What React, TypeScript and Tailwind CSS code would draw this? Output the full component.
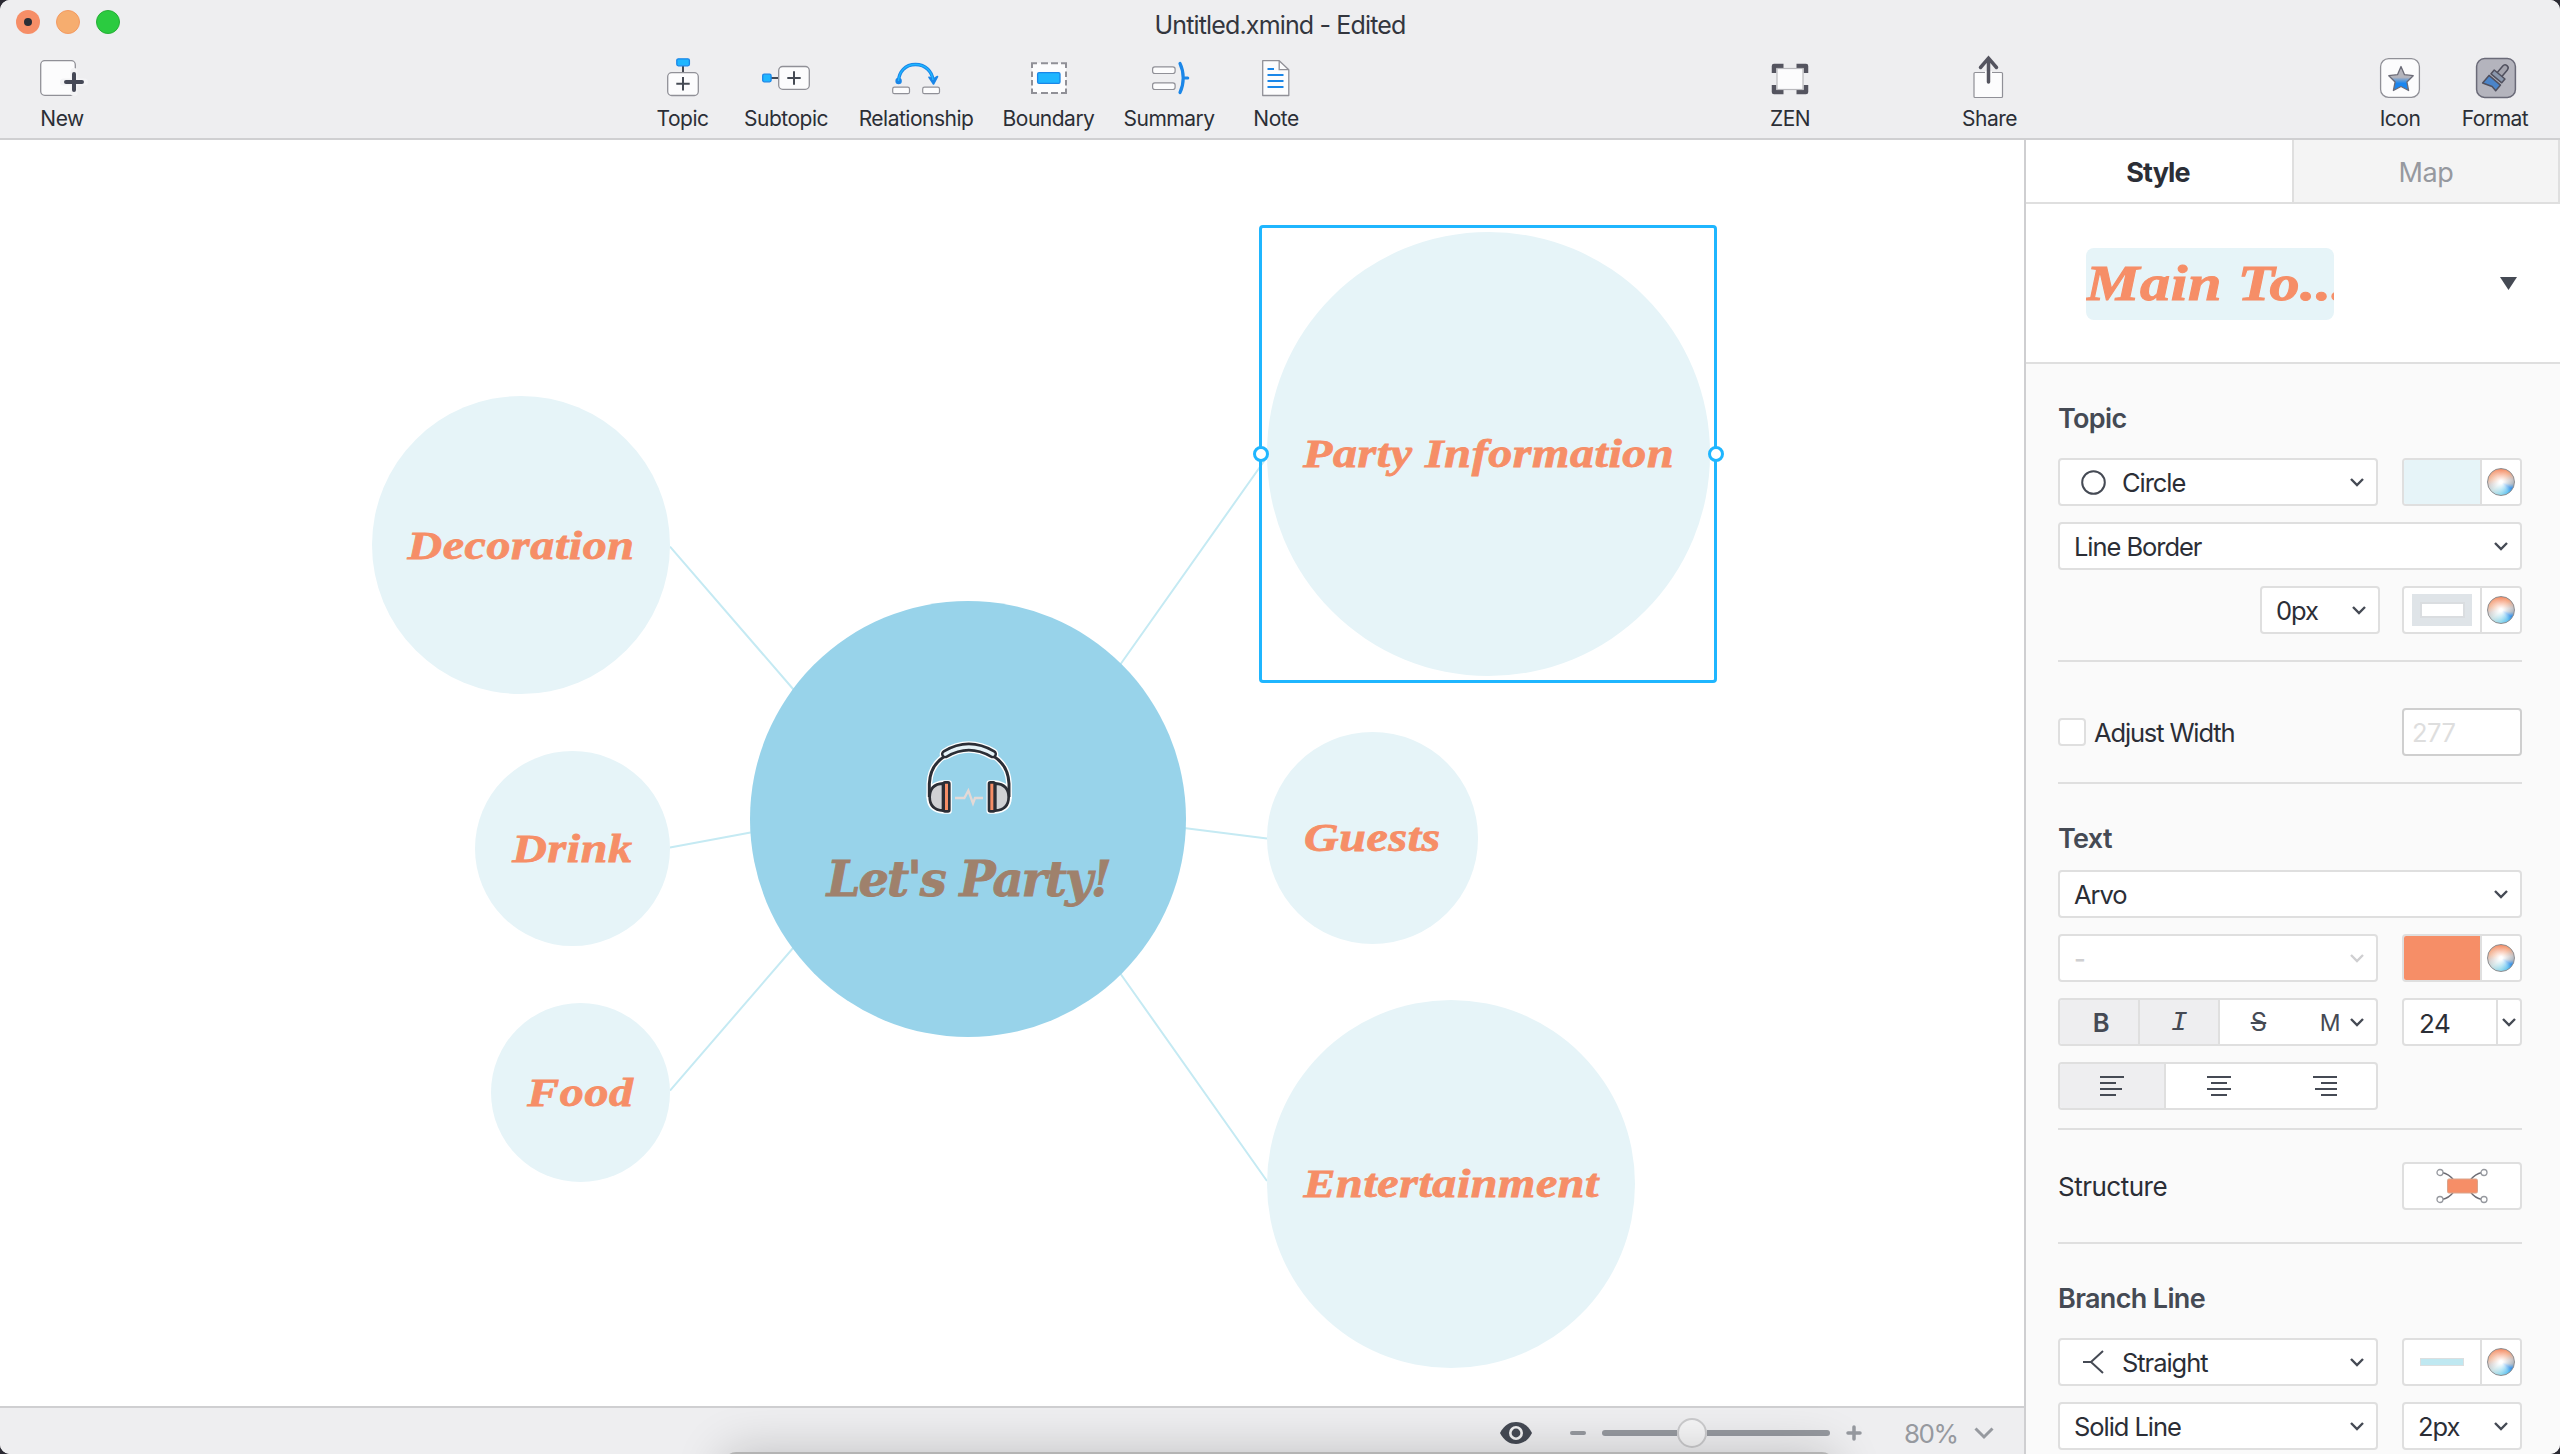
import type { ReactNode } from "react";
import clsx from "clsx";

const nodes = [
  { label: "Decoration", cx: 521, cy: 405.3, r: 149.2 },
  { label: "Drink", cx: 572.4, cy: 708.5, r: 97.7 },
  { label: "Food", cx: 580.5, cy: 952.4, r: 89.7 },
  { label: "Party Information", cx: 1488.3, cy: 314.2, r: 221.8 },
  { label: "Guests", cx: 1372.3, cy: 698, r: 105.7 },
  { label: "Entertainment", cx: 1451, cy: 1044, r: 184.3 },
];

const Chevron = ({ className = "text-[#454a54]" }: { className?: string }) => (
  <svg width="16" height="12" viewBox="0 0 16 12" className={clsx("shrink-0", className)}>
    <path d="M2 3l6 6 6-6" fill="none" stroke="currentColor" strokeWidth="2.4" />
  </svg>
);

const ColorWheel = () => (
  <div className="flex h-full w-10 items-center justify-center border-l-2 border-[#dfdfdf] bg-white">
    <div className="h-7 w-7 rounded-full border border-[#8d8d90] bg-[radial-gradient(circle,#ffffff_8%,rgba(255,255,255,0)_68%),conic-gradient(#f68e67_0deg,#f3a27c_40deg,#c3c1c4_80deg,#a9b4bf_100deg,#2f8ee8_122deg,#5fc0f0_145deg,#8fd8ec_180deg,#c9dfe2_225deg,#d3cfcf_255deg,#f2b595_290deg,#f68e67_360deg)]" />
  </div>
);

const Swatch = ({ children, className }: { children?: ReactNode; className?: string }) => (
  <div className="flex h-12 w-[120px] overflow-hidden rounded border-2 border-[#dfdfdf] bg-white">
    <div className={clsx("flex flex-1 items-center justify-center", className)}>{children}</div>
    <ColorWheel />
  </div>
);

const Select = ({
  children,
  className,
  disabled,
}: {
  children: ReactNode;
  className?: string;
  disabled?: boolean;
}) => (
  <div
    className={clsx(
      "flex h-12 items-center justify-between rounded border-2 border-[#dfdfdf] bg-white pr-[11px] pl-[14px] text-[25.5px] tracking-[-1.05px]",
      disabled ? "text-[#cfcfd1]" : "text-[#2b2e36]",
      className
    )}
  >
    <span className="pt-0.5">{children}</span>
    <Chevron className={disabled ? "text-[#cfcfd1]" : "text-[#454a54]"} />
  </div>
);

const ToolButton = ({
  label,
  className,
  children,
}: {
  label: string;
  className?: string;
  children: ReactNode;
}) => (
  <div className={clsx("flex flex-col items-center", className)}>
    <svg width="48" height="44" viewBox="0 0 48 44" fill="none" className="overflow-visible">
      {children}
    </svg>
    <span className="mt-[7px] text-[21px] leading-7 tracking-[-0.5px] whitespace-nowrap text-[#2b2e36]">
      {label}
    </span>
  </div>
);

const AlignIcon = ({ d }: { d: string }) => (
  <svg width="24" height="20" viewBox="0 0 24 20" fill="none">
    <path d={d} stroke="#454a54" strokeWidth="2" />
  </svg>
);

const Heading = ({ children }: { children: ReactNode }) => (
  <h2 className="text-[27px] leading-8 font-semibold tracking-[-0.65px] text-[#454a54]">{children}</h2>
);

const Divider = ({ className }: { className?: string }) => (
  <div className={clsx("h-0.5 bg-[#dfdfdf]", className)} />
);

const Toolbar = () => (
  <div className="flex h-[88px] pt-1">
    <ToolButton label="New" className="w-[124px]">
      <rect x="2.7" y="6.7" width="34.6" height="34.6" rx="4" fill="#fcfcfd" stroke="#909097" strokeWidth="1.3" />
      <path d="M36 17.5v21M25.500 28h21" stroke="#f3f3f5" strokeWidth="7" strokeLinecap="round" />
      <path d="M36 20v16M28 28h16" stroke="#454856" strokeWidth="4" strokeLinecap="round" />
    </ToolButton>

    <ToolButton label="Topic" className="ml-[518px] w-[81px]">
      <path d="M24 12v7" stroke="#454a54" strokeWidth="2" />
      <rect x="17.8" y="4.8" width="12.6" height="7" rx="1.5" fill="#1fb6ff" stroke="#1a86e8" strokeWidth="1.3" />
      <rect x="8.7" y="18.7" width="30.6" height="22.8" rx="4" fill="#fcfcfd" stroke="#909097" strokeWidth="1.3" />
      <path d="M24 23v13.4M17.3 29.7h13.4" stroke="#454a54" strokeWidth="2" />
    </ToolButton>
    <ToolButton label="Subtopic" className="w-[126px]">
      <path d="M8 24h8" stroke="#454a54" strokeWidth="2" />
      <rect x="0.7" y="20.2" width="8.4" height="7.6" rx="1.5" fill="#1fb6ff" stroke="#1a86e8" strokeWidth="1.3" />
      <rect x="16.7" y="12.5" width="30.6" height="22.8" rx="4" fill="#fcfcfd" stroke="#909097" strokeWidth="1.3" />
      <path d="M32 17.3v13.4M25.3 24h13.4" stroke="#454a54" strokeWidth="2" />
    </ToolButton>
    <ToolButton label="Relationship" className="w-[134px]">
      <path d="M6.5 27C7 18 13 10.5 23.5 10.5S40 18 41 26" stroke="#1a86e8" strokeWidth="3.4" />
      <circle cx="6.6" cy="27" r="3.2" fill="#1a86e8" />
      <path d="M37 23.2l4 2 4.500-2.700-4 7.500z" fill="#1a86e8" stroke="#1a86e8" strokeWidth="1.6" strokeLinejoin="round" />
      <path d="M6.5 27C7 18 13 10.5 23.5 10.5S40 18 41 26" stroke="#1fb6ff" strokeWidth="1.4" />
      <rect x="0.7" y="33.1" width="16.8" height="6.6" rx="1.8" fill="#fcfcfd" stroke="#909097" strokeWidth="1.2" />
      <rect x="30.7" y="33.1" width="16.8" height="6.6" rx="1.8" fill="#fcfcfd" stroke="#909097" strokeWidth="1.2" />
    </ToolButton>
    <ToolButton label="Boundary" className="w-[131px]">
      <rect x="7" y="9.3" width="34.1" height="29.600" rx="1" fill="#fcfcfd" />
      <path
        d="M7 14V9.300h5M16 9.300h7M26 9.300h7M36 9.300h5V14M41 17.500v5.500M41 26v5.500M41 34.500v4.400h-5M33 38.900h-7M23 38.900h-7M12 38.900H7v-4.400M7 31.500V26M7 23v-5.500"
        stroke="#909097"
        strokeWidth="2"
      />
      <rect x="12.6" y="18.6" width="22.4" height="10.8" rx="1.5" fill="#1fb6ff" stroke="#1a86e8" strokeWidth="1.3" />
    </ToolButton>
    <ToolButton label="Summary" className="w-[110px]">
      <rect x="7.6" y="12.9" width="22.5" height="6.6" rx="2.2" fill="#fcfcfd" stroke="#909097" strokeWidth="1.2" />
      <rect x="7.6" y="28.9" width="22.5" height="6.6" rx="2.2" fill="#fcfcfd" stroke="#909097" strokeWidth="1.2" />
      <path d="M35 9.5c2.200 4.500 3.2 9.500 3.2 14.500s-1 10-3.200 14.500M38.2 24h4.500" stroke="#1a86e8" strokeWidth="3.2" strokeLinecap="round" />
    </ToolButton>
    <ToolButton label="Note" className="w-[104px]">
      <path d="M10.700 6.7h16.5l9.6 9v25.8H10.700z" fill="#fcfcfd" stroke="#909097" strokeWidth="1.3" strokeLinejoin="round" />
      <path d="M27.2 6.7v9h9.6" stroke="#909097" strokeWidth="1.3" />
      <path d="M15.500 15H22M15.500 21h16M15.500 27h16M15.500 33h16" stroke="#1a86e8" strokeWidth="2" />
    </ToolButton>

    <ToolButton label="ZEN" className="ml-[402px] w-[120px]">
      <path d="M8 19v-7h9.500M30.500 12H40v7M40 31v7h-9.500M17.500 38H8v-7" stroke="#54545f" strokeWidth="4.500" strokeLinejoin="round" />
      <rect x="11" y="14.5" width="26" height="21" fill="#fcfcfd" stroke="#b9b9bd" strokeWidth="1.2" />
    </ToolButton>
    <ToolButton label="Share" className="ml-[79px] w-[121px]">
      <rect x="8" y="18.5" width="28.500" height="25" rx="1" fill="#fcfcfd" stroke="#909097" strokeWidth="1.2" />
      <path d="M22.500 17v12" stroke="#fcfcfd" strokeWidth="7" />
      <path d="M22.500 28V5M14.500 13.500l8-9.300 8 9.300" stroke="#54545f" strokeWidth="3.500" strokeLinecap="round" />
    </ToolButton>

    <ToolButton label="Icon" className="ml-[302px] w-[96px]">
      <rect x="4.6" y="4.6" width="38.8" height="38.8" rx="8" fill="#fcfcfd" stroke="#909097" strokeWidth="1.3" />
      <defs>
        <linearGradient id="star" x1="0" y1="0" x2="0" y2="1">
          <stop offset="0.45" stopColor="#b4b4bc" />
          <stop offset="0.7" stopColor="#1a86f0" />
        </linearGradient>
      </defs>
      <path
        d="M25 12.5l3.5 8.2 8.7 1-6.3 6.3 1.7 8.500-7.600-4-7.600 4 1.700-8.500-6.300-6.300 8.700-1z"
        fill="url(#star)"
        stroke="#6c6c78"
        strokeWidth="1.3"
        strokeLinejoin="round"
      />
    </ToolButton>
    <ToolButton label="Format" className="w-[94px]">
      <rect x="5.6" y="4.6" width="38.8" height="38.8" rx="8" fill="#b4b4bd" stroke="#6a6a78" strokeWidth="1.5" />
      <g transform="rotate(40 25 24)" stroke="#50505e" strokeWidth="1.5" strokeLinejoin="round">
        <path d="M22.5 20V10.500a3 3 0 016 0V20z" fill="#a3a3ad" />
        <path d="M18.5 19h14v5h-14z" fill="#8b98ad" />
        <path d="M18 26.500h15V34l-5.500-1-9.500 3.500z" fill="#4b84c8" />
      </g>
    </ToolButton>
  </div>
);

const Headphones = () => (
  <svg width="94" height="79" viewBox="430 115 282 237" fill="none" className="ml-[3px]">
    <g stroke="#fff" strokeWidth="17" strokeLinejoin="round" strokeLinecap="round">
      <path d="M449 292v-40q2-55 48-84M688 292v-40q-2-55-48-84" />
      <path d="M497 163q70-42 142 0" strokeWidth="34" />
      <path d="M508 250v84h-15q-44-4-44-42t44-42zM629 250v84h15q44-4 44-42t-44-42z" fill="#fff" />
    </g>
    <path d="M449 292v-40q2-55 48-84M688 292v-40q-2-55-48-84" stroke="#2b2e36" strokeWidth="9" />
    <path d="M497 163q70-42 142 0" stroke="#2b2e36" strokeWidth="26" strokeLinecap="round" />
    <path d="M497 163q70-42 142 0" stroke="#e6f3f8" strokeWidth="11" strokeLinecap="round" />
    <path d="M490 251v82q-40-3-40-41t40-41zM647 251v82q40-3 40-41t-40-41z" fill="#d0d1d4" stroke="#2b2e36" strokeWidth="8" />
    <rect x="492" y="248" width="17" height="87" rx="4" fill="#f68e67" stroke="#2b2e36" strokeWidth="8" />
    <rect x="628" y="248" width="17" height="87" rx="4" fill="#f68e67" stroke="#2b2e36" strokeWidth="8" />
    <path d="M526 295h28l12-22 14 38 6-16h24" stroke="#e4d9d6" strokeWidth="7" />
  </svg>
);

const MindMap = () => (
  <div className="relative flex-1 overflow-hidden bg-white">
    <svg width="2024" height="1266" viewBox="0 140 2024 1266" className="absolute inset-0">
      <path
        d="M670 546.6L800 697M670 847.5L760 830.7M670 1090.6L800 940M1267 457L1115 672M1180 827.5L1267 838.5M1115 966L1267 1181"
        stroke="#c5eaf3"
        strokeWidth="2"
      />
    </svg>

    {nodes.map((n) => (
      <div
        key={n.label}
        className="absolute flex items-center justify-center rounded-full bg-[#e6f4f8]"
        style={{ left: n.cx - n.r, top: n.cy - n.r, width: n.r * 2, height: n.r * 2 }}
      >
        <span className="scale-x-[1.17] font-['Liberation_Serif',serif] text-[41px] font-bold tracking-[0.5px] whitespace-nowrap text-[#f68e67] italic [-webkit-text-stroke:0.8px_#f68e67]">
          {n.label}
        </span>
      </div>
    ))}

    {/* Central topic */}
    <div className="absolute top-[460.8px] left-[750.3px] flex h-[436px] w-[436px] flex-col items-center rounded-full bg-[#98d3ea] pt-[137px]">
      <Headphones />
      <span className="mt-[34px] font-['DejaVu_Serif',serif] text-[48px] leading-[56px] font-bold tracking-[-2px] whitespace-nowrap text-[#9f816c] italic [-webkit-text-stroke:0.8px_#9f816c]">
        Let's Party!
      </span>
    </div>

    {/* Selection frame */}
    <div className="absolute top-[85px] left-[1259px] h-[458px] w-[458px] rounded-[4px] border-3 border-[#1fb6ff]">
      <div className="absolute top-[218px] -left-[9.5px] h-4 w-4 rounded-full border-3 border-[#1fb6ff] bg-white" />
      <div className="absolute top-[218px] -right-[9.5px] h-4 w-4 rounded-full border-3 border-[#1fb6ff] bg-white" />
    </div>
  </div>
);

const StatusBar = () => (
  <div className="flex h-12 shrink-0 items-center border-t-2 border-[#cfcfd1] bg-[#eeeef0]">
    <svg width="32" height="24" viewBox="0 0 32 24" className="mt-1 ml-[1500px]">
      <path d="M0 12C4 4 10 1 16 1s12 3 16 11c-4 8-10 11-16 11S4 20 0 12z" fill="#454a54" />
      <circle cx="16" cy="12" r="5.7" fill="#454a54" stroke="#f2f2f3" strokeWidth="2.6" />
    </svg>
    <div className="mt-1 ml-[38px] h-1 w-4 rounded-sm bg-[#96999f]" />
    <div className="mt-1 ml-4 flex h-8 w-[228px] items-center">
      <div className="h-1.5 w-[75px] rounded-l-full bg-[#96999f]" />
      <div className="h-[30px] w-[30px] rounded-full border-2 border-[#cbcbcd] bg-[#f5f5f6]" />
      <div className="h-1.5 flex-1 rounded-r-full bg-[#96999f]" />
    </div>
    <svg width="16" height="16" viewBox="0 0 16 16" className="mt-1 ml-4">
      <path d="M8 2v12M2 8h12" stroke="#96999f" strokeWidth="3.5" strokeLinecap="round" />
    </svg>
    <span className="mt-1 ml-[42px] w-[70px] text-[26px] tracking-[-1.5px] text-[#96999f]">80%</span>
    <svg width="20" height="14" viewBox="0 0 20 14" className="mt-1">
      <path d="M1.5 2.5l8.5 8.500 8.500-8.500" fill="none" stroke="#96999f" strokeWidth="3" />
    </svg>
  </div>
);

const StylePanel = () => (
  <aside className="flex w-[536px] shrink-0 flex-col overflow-hidden border-l-2 border-[#cfcfd1] bg-[#fafafa]">
    {/* Tabs */}
    <div className="flex h-16 shrink-0 border-b-2 border-[#dfdfdf] bg-white text-[27px]">
      <div className="flex w-[266px] items-center justify-center pt-1 pr-0.5 font-bold tracking-[-0.9px] text-[#2b2e36]">
        Style
      </div>
      <div className="flex flex-1 items-center justify-center border-x-2 border-[#dfdfdf] bg-[#f4f4f4] pt-1 tracking-[-0.3px] text-[#96999f]">
        Map
      </div>
    </div>

    {/* Theme preview */}
    <div className="flex h-40 shrink-0 items-center justify-between border-b-2 border-[#dfdfdf] bg-white pr-[43px] pl-[60px]">
      <div className="mt-0.5 h-[72px] w-[248px] overflow-hidden rounded-lg bg-[#e6f4f8]">
        <div className="origin-left scale-x-[1.18] font-['Liberation_Serif',serif] text-[51px] leading-[70px] font-bold tracking-[0.5px] whitespace-nowrap text-[#f68e67] italic [-webkit-text-stroke:1px_#f68e67]">
          Main To...
        </div>
      </div>
      <svg width="17" height="13" viewBox="0 0 17 13">
        <path d="M0 0h17l-8.500 13z" fill="#454a54" />
      </svg>
    </div>

    <div className="flex shrink-0 flex-col pr-[38px] pl-8 tracking-[-0.5px]">
      {/* Topic */}
      <div className="pt-[39px] pb-[23px]">
        <Heading>Topic</Heading>
      </div>
      <div className="flex flex-col gap-4">
        <div className="flex justify-between">
          <Select className="w-80">
            <span className="flex items-center gap-4 pl-[7px]">
              <svg width="25" height="25" viewBox="0 0 25 25" className="-mt-0.5">
                <circle cx="12.5" cy="12.5" r="11.3" fill="none" stroke="#454a54" strokeWidth="2" />
              </svg>
              Circle
            </span>
          </Select>
          <Swatch className="bg-[#e6f4f8]" />
        </div>
        <Select>Line Border</Select>
        <div className="flex justify-end gap-[22px]">
          <Select className="w-[120px]">0px</Select>
          <Swatch>
            <div className="flex h-8 w-[60px] items-center justify-center bg-[#dfe4e8]">
              <div className="h-4 w-[45px] border-2 border-[#dadde0] bg-white" />
            </div>
          </Swatch>
        </div>
      </div>

      <Divider className="mt-[26px]" />

      {/* Width */}
      <div className="mt-[46px] flex items-center text-[25.5px] text-[#2b2e36]">
        <div className="h-7 w-7 rounded border-2 border-[#dfdfdf] bg-white" />
        <span className="ml-2 pt-0.5 tracking-[-1.15px]">Adjust Width</span>
        <div className="ml-auto flex h-12 w-[120px] items-center rounded border-2 border-[#cfcfcf] bg-white pt-0.5 pl-2 text-[#dedede]">
          277
        </div>
      </div>

      <Divider className="mt-[26px]" />

      {/* Text */}
      <div className="pt-[39px] pb-[15px]">
        <Heading>Text</Heading>
      </div>
      <div className="flex flex-col gap-4">
        <Select>Arvo</Select>
        <div className="flex justify-between">
          <Select className="w-80 font-medium" disabled>
            -
          </Select>
          <Swatch className="bg-[#f68e67]" />
        </div>
        <div className="flex justify-between">
          <div className="flex h-12 w-80 overflow-hidden rounded border-2 border-[#dfdfdf] bg-white text-[#454a54]">
            <div className="flex w-20 items-center justify-center border-r-2 border-[#dfdfdf] bg-[#eeeef0] pt-0.5 pl-1 text-[25.5px] font-semibold">
              B
            </div>
            <div className="flex w-20 items-center justify-center border-r-2 border-[#dfdfdf] bg-[#eeeef0] pt-0.5 font-['Liberation_Mono',monospace] text-[28px] italic">
              I
            </div>
            <div className="flex w-[77px] items-center justify-center pt-0.5 text-[25px]">
              <span className="px-0.5 line-through decoration-2">S</span>
            </div>
            <div className="flex flex-1 items-center justify-end gap-[9px] pr-[11px] text-[23px]">
              <span className="pt-0.5">M</span>
              <Chevron />
            </div>
          </div>
          <div className="flex h-12 w-[120px] items-center rounded border-2 border-[#dfdfdf] bg-white text-[26px] text-[#2b2e36]">
            <span className="flex-1 pt-0.5 pl-[15px]">24</span>
            <div className="flex h-full w-6 items-center justify-center border-l-2 border-[#dfdfdf]">
              <Chevron />
            </div>
          </div>
        </div>
        <div className="flex h-12 w-80 overflow-hidden rounded border-2 border-[#dfdfdf] bg-white">
          <div className="flex w-[106px] items-center justify-center border-r-2 border-[#dfdfdf] bg-[#eeeef0]">
            <AlignIcon d="M0 1h24M0 7h16M0 13h22M0 19h16" />
          </div>
          <div className="flex w-[106px] items-center justify-center">
            <AlignIcon d="M0 1h24M4 7h16M0 13h24M4 19h16" />
          </div>
          <div className="flex flex-1 items-center justify-center pl-0.5">
            <AlignIcon d="M0 1h24M8 7h16M2 13h22M8 19h16" />
          </div>
        </div>
      </div>

      <Divider className="mt-[18px]" />

      {/* Structure */}
      <div className="mt-8 flex items-center justify-between text-[26px] text-[#2b2e36]">
        Structure
        <div className="flex h-12 w-[120px] items-center justify-center rounded border-2 border-[#dfdfdf] bg-white">
          <svg width="52" height="36" viewBox="0 0 52 36" fill="none" stroke="#6c6c74" strokeWidth="1.3">
            <path d="M6 4.5c6 1 9 4 12 8M46 4.5c-6 1-9 4-12 8M6 31.500c6-1 9-4 12-8M46 31.500c-6-1-9-4-12-8" />
            <rect x="11.5" y="11" width="30" height="14" rx="1.5" fill="#f68e67" stroke="#d9a48c" strokeWidth="1" />
            <g fill="#fff" stroke="#96999f">
              <circle cx="4" cy="4.5" r="3" />
              <circle cx="48" cy="4.5" r="3" />
              <circle cx="4" cy="31.5" r="3" />
              <circle cx="48" cy="31.5" r="3" />
            </g>
          </svg>
        </div>
      </div>

      <Divider className="mt-8" />

      {/* Branch line */}
      <div className="pt-[39px] pb-[23px]">
        <Heading>Branch Line</Heading>
      </div>
      <div className="flex flex-col gap-4">
        <div className="flex justify-between">
          <Select className="w-80">
            <span className="flex items-center gap-[18px] pl-[9px]">
              <svg width="21" height="24" viewBox="0 0 21 24" className="-mt-0.5">
                <path d="M0 12h8M20 1L8 12l12 11" fill="none" stroke="#454a54" strokeWidth="2" />
              </svg>
              Straight
            </span>
          </Select>
          <Swatch>
            <div className="h-2 w-11 border border-[#dcdfe0] bg-[#bfe8f1]" />
          </Swatch>
        </div>
        <div className="flex justify-between">
          <Select className="w-80">Solid Line</Select>
          <Select className="w-[120px]">2px</Select>
        </div>
      </div>
    </div>
  </aside>
);

const App = () => {
  return (
    <div className="h-[1454px] w-[2560px] overflow-hidden bg-[#2b2a33]">
      <div className="relative flex h-full flex-col overflow-hidden rounded-[10px] bg-white font-[Inter,sans-serif]">
        {/* Title bar and toolbar */}
        <header className="h-[140px] shrink-0 border-b-2 border-[#cfcfd1] bg-[#eeeef0]">
          <div className="relative flex h-[50px] items-center justify-center">
            <div className="absolute top-0 left-4 flex gap-4 pt-2.5">
              <div className="flex h-6 w-6 items-center justify-center rounded-full bg-[#f68e67]">
                <div className="h-2 w-2 rounded-full bg-[#2b2e36]" />
              </div>
              <div className="h-6 w-6 rounded-full border border-[#f39a62] bg-[#f6ad6f]" />
              <div className="h-6 w-6 rounded-full border border-[#27ae37] bg-[#2bcb40]" />
            </div>
            <span className="pt-0.5 text-[25px] tracking-[-0.85px] text-[#33363e]">
              Untitled.xmind - Edited
            </span>
          </div>
          <Toolbar />
        </header>

        <div className="flex min-h-0 flex-1">
          <main className="flex w-[2024px] shrink-0 flex-col">
            <MindMap />
            <StatusBar />
          </main>
          <StylePanel />
        </div>

        {/* Dock shadow at the bottom edge */}
        <div className="absolute top-[1452px] left-[724px] h-20 w-[1110px] rounded-xl bg-[#b4b4b4] shadow-[0_0_50px_rgba(0,0,0,0.2)]" />
      </div>
    </div>
  );
};

export default App;
